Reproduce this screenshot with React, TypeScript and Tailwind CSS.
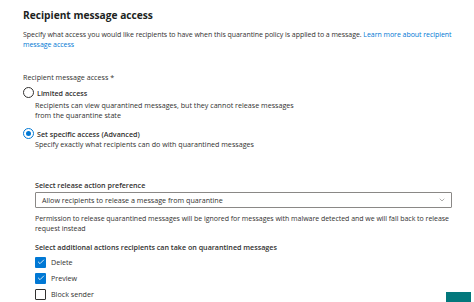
import { Check, ChevronDown } from 'lucide-react';

const font = { fontFamily: '"Open Sans", "Noto Sans", sans-serif' };

function Radio({ checked }: { checked?: boolean }) {
  return checked ? (
    <span className="w-[11px] h-[11px] rounded-full border border-[#0078d4] flex items-center justify-center flex-shrink-0">
      <span className="w-[5px] h-[5px] rounded-full bg-[#0078d4]" />
    </span>
  ) : (
    <span className="w-[11px] h-[11px] rounded-full border border-[#323130] flex-shrink-0" />
  );
}

function CheckBox({ label, checked }: { label: string; checked?: boolean }) {
  return (
    <div className="flex items-center h-[16px] gap-[5px]">
      {checked ? (
        <span className="w-[11px] h-[11px] rounded-[1px] bg-[#0078d4] flex items-center justify-center">
          <Check className="w-[8px] h-[8px] text-white" strokeWidth={2.5} />
        </span>
      ) : (
        <span className="w-[11px] h-[11px] rounded-[1px] border border-[#323130]" />
      )}
      <span>{label}</span>
    </div>
  );
}

export default function App() {
  return (
    <div
      className="relative w-[474px] h-[302px] overflow-hidden bg-white text-[#323130] text-[7.15px] leading-[10px] px-[23px] pt-[6px]"
      style={font}
    >
      <h1 className="text-[10.2px] leading-[18px] font-bold text-[#201f1e]">Recipient message access</h1>
      <p className="mt-[6px] text-[7px] tracking-[-0.05px] whitespace-nowrap">
        Specify what access you would like recipients to have when this quarantine policy is applied to a message.{' '}
        <span className="text-[#0078d4]">
          Learn more about recipient
          <br />
          message access
        </span>
      </p>

      <div className="mt-[22px]">Recipient message access *</div>

      <div className="mt-[5px] flex items-center gap-[3px]">
        <Radio />
        <span className="font-semibold">Limited access</span>
      </div>
      <div className="mt-[2px] pl-[12px]">
        Recipients can view quarantined messages, but they cannot release messages
        <br />
        from the quarantine state
      </div>

      <div className="mt-[8px] flex items-center gap-[3px]">
        <Radio checked />
        <span className="font-semibold">Set specific access (Advanced)</span>
      </div>
      <div className="pl-[12px]">Specify exactly what recipients can do with quarantined messages</div>

      <div className="pl-[12px]">
        <div className="mt-[31px] font-semibold">Select release action preference</div>
        <div className="mt-[2px] h-[16px] w-[417px] border border-[#8a8886] rounded-[1px] flex items-center justify-between pl-[6px] pr-[5px]">
          <span>Allow recipients to release a message from quarantine</span>
          <ChevronDown className="w-[8px] h-[8px] text-[#605e5c]" strokeWidth={1.5} />
        </div>
        <p className="mt-[6px] text-[7px] tracking-[-0.03px] whitespace-nowrap">
          Permission to release quarantined messages will be ignored for messages with malware detected and we will fall back to release
          <br />
          request instead
        </p>
        <div className="mt-[8px] font-semibold">Select additional actions recipients can take on quarantined messages</div>
        <div className="mt-[2px] flex flex-col">
          <CheckBox label="Delete" checked />
          <CheckBox label="Preview" checked />
          <CheckBox label="Block sender" />
        </div>
      </div>

      <div className="absolute left-[446px] top-[292px] w-[25px] h-[14px] bg-[#03787c]" />
    </div>
  );
}
